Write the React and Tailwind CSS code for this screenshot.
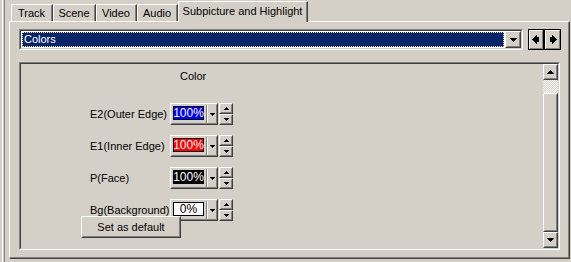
import React from 'react';

function Raised({ className = '', innerClassName = '', children }) {
  return (
    <div className={`border border-t-white border-l-white border-r-[#404040] border-b-[#404040] ${className}`}>
      <div className={`w-full h-full border border-t-[#d4d0c8] border-l-[#d4d0c8] border-r-[#808080] border-b-[#808080] ${innerClassName}`}>
        {children}
      </div>
    </div>
  );
}

function Sunken({ className = '', innerClassName = '', children }) {
  return (
    <div className={`border border-t-[#808080] border-l-[#808080] border-r-white border-b-white ${className}`}>
      <div className={`w-full h-full border border-t-[#404040] border-l-[#404040] border-r-[#d4d0c8] border-b-[#d4d0c8] ${innerClassName}`}>
        {children}
      </div>
    </div>
  );
}

function Tri({ dir, w, h }) {
  const pts = {
    down: `0,0 ${w},0 ${w / 2},${h}`,
    up: `0,${h} ${w},${h} ${w / 2},0`,
  };
  return (
    <svg width={w} height={h} viewBox={`0 0 ${w} ${h}`} shapeRendering="crispEdges">
      <polygon points={pts[dir]} fill="#000" />
    </svg>
  );
}

function NavArrow({ dir }) {
  return (
    <svg width="8" height="11" viewBox="0 0 8 11" shapeRendering="crispEdges">
      {dir === 'left' ? (
        <g fill="#000">
          <polygon points="0,5.5 5,0.5 5,10.5" />
          <rect x="5" y="3" width="2" height="5" />
        </g>
      ) : (
        <g fill="#000">
          <polygon points="8,5.5 3,0.5 3,10.5" />
          <rect x="1" y="3" width="2" height="5" />
        </g>
      )}
    </svg>
  );
}

function Tab({ label, width, active }) {
  if (active) {
    return (
      <div
        className={`${width} h-[21px] -mb-px z-10 bg-[#d4d0c8] border-l border-t border-l-white border-t-white border-r border-r-[#404040] rounded-tl-[2px]`}
      >
        <div className="h-full w-full border-r border-r-[#808080] pt-[2px] text-center leading-[14px]">{label}</div>
      </div>
    );
  }
  return (
    <div
      className={`${width} h-[17px] border-l border-t border-l-white border-t-white border-r border-r-[#404040] rounded-tl-[2px]`}
    >
      <div className="h-full w-full border-r border-r-[#808080] text-center leading-[17px]">{label}</div>
    </div>
  );
}

const rows = [
  { label: 'E2(Outer Edge)', bg: 'bg-[#0000ff]', text: 'text-white', value: '100%' },
  { label: 'E1(Inner Edge)', bg: 'bg-[#ff0000]', text: 'text-white', value: '100%' },
  { label: 'P(Face)', bg: 'bg-black', text: 'text-white', value: '100%' },
  { label: 'Bg(Background)', bg: 'bg-white', text: 'text-black', value: '0%' },
];

function ColorRow({ row }) {
  return (
    <div className="flex items-center h-[22px]">
      <div className="w-[80px]">{row.label}</div>
      <Raised className="w-[48px] h-[22px] flex-none" innerClassName="flex items-start">
        <div
          className={`mt-[1px] ml-[1px] w-[31px] h-[14px] border border-black ${row.bg} ${row.text} flex items-center justify-center text-[12px] leading-[12px]`}
        >
          {row.value}
        </div>
        <div className="ml-[2px] w-[2px] h-full border-l border-l-[#808080] border-r border-r-white" />
        <div className="ml-[2px] self-center">
          <Tri dir="down" w={5} h={3} />
        </div>
      </Raised>
      <div className="ml-[1px] flex flex-col">
        <Raised className="w-[14px] h-[11px]" innerClassName="flex items-center justify-center">
          <Tri dir="up" w={5} h={3} />
        </Raised>
        <Raised className="w-[14px] h-[11px]" innerClassName="flex items-center justify-center">
          <Tri dir="down" w={5} h={3} />
        </Raised>
      </div>
    </div>
  );
}

export default function App() {
  return (
    <div className="relative w-[571px] h-[262px] bg-[#d4d0c8] flex overflow-hidden font-['Liberation_Sans',Arial,sans-serif] text-[11px] text-black">
      <div className="w-[9px] flex-none flex">
        <div className="ml-[2px] w-[3px] h-full border-l border-l-white border-r border-r-[#808080]" />
      </div>

      <div className="w-[561px] flex flex-col">
        <div className="h-[21px] flex items-end pl-[2px]">
          <Tab label="Track" width="w-[42px]" />
          <Tab label="Scene" width="w-[43px]" />
          <Tab label="Video" width="w-[41px]" />
          <Tab label="Audio" width="w-[41px]" />
          <Tab label="Subpicture and Highlight" width="w-[130px]" active />
        </div>

        <div className="h-[238px] border-l border-t border-l-white border-t-white border-r border-b border-r-[#404040] border-b-[#404040]">
          <div className="w-full h-full border-r border-b border-r-[#808080] border-b-[#808080]">
            <div className="flex pt-[7px] pl-[9px]">
              <Sunken className="w-[504px] h-[21px]" innerClassName="bg-white flex">
                <div className="flex-1 m-[1px] bg-[#0a246a] border border-dotted border-[#f0e6a8] text-white pl-[1px] leading-[13px]">
                  Colors
                </div>
                <Raised className="w-[16px] h-full flex-none" innerClassName="flex items-center justify-center bg-[#d4d0c8]">
                  <Tri dir="down" w={7} h={4} />
                </Raised>
              </Sunken>
              <div className="ml-[5px] flex">
                <div className="w-[16px] h-[21px] border border-black">
                  <div className="w-full h-full border border-t-white border-l-white border-r-[#808080] border-b-[#808080] flex items-center justify-center">
                    <NavArrow dir="left" />
                  </div>
                </div>
                <div className="w-[17px] h-[21px] border border-black">
                  <div className="w-full h-full border border-t-white border-l-white border-r-[#808080] border-b-[#808080] flex items-center justify-center">
                    <NavArrow dir="right" />
                  </div>
                </div>
              </div>
            </div>

            <Sunken className="mt-[12px] ml-[9px] w-[541px] h-[188px]" innerClassName="flex">
              <div className="flex-1">
                <div className="pl-[159px] pt-[6px] leading-[13px]">Color</div>
                <div className="mt-[20px] ml-[69px] flex flex-col gap-[10px]">
                  {rows.map((r) => (
                    <ColorRow key={r.label} row={r} />
                  ))}
                </div>
              </div>
              <div className="w-[15px] flex flex-col">
                <Raised className="h-[16px] flex-none" innerClassName="flex items-center justify-center">
                  <Tri dir="up" w={7} h={4} />
                </Raised>
                <div className="h-[13px] flex-none bg-[image:repeating-conic-gradient(#ffffff_0%_25%,#d4d0c8_0%_50%)] bg-[length:2px_2px]" />
                <Raised className="flex-1" />
                <Raised className="h-[16px] flex-none" innerClassName="flex items-center justify-center">
                  <Tri dir="down" w={7} h={4} />
                </Raised>
              </div>
            </Sunken>
          </div>
        </div>
      </div>

      <Raised
        className="absolute left-[81px] top-[216px] w-[100px] h-[22px] bg-[#d4d0c8]"
        innerClassName="flex items-center justify-center"
      >
        Set as default
      </Raised>
    </div>
  );
}
